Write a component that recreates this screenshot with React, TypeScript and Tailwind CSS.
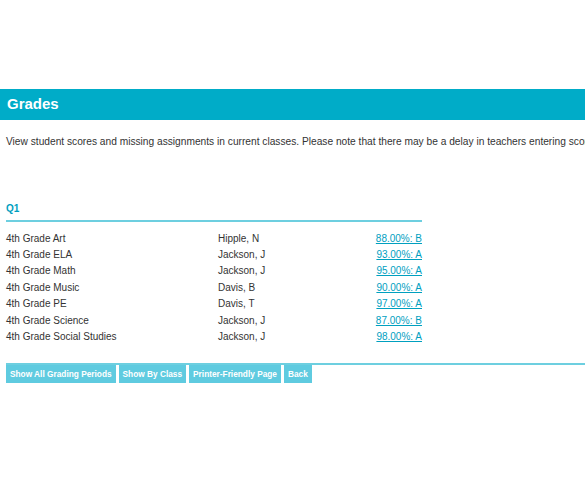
export default function App() {
  const rows = [
    ["4th Grade Art", "Hipple, N", "88.00%: B"],
    ["4th Grade ELA", "Jackson, J", "93.00%: A"],
    ["4th Grade Math", "Jackson, J", "95.00%: A"],
    ["4th Grade Music", "Davis, B", "90.00%: A"],
    ["4th Grade PE", "Davis, T", "97.00%: A"],
    ["4th Grade Science", "Jackson, J", "87.00%: B"],
    ["4th Grade Social Studies", "Jackson, J", "98.00%: A"],
  ];
  const btns = ["Show All Grading Periods", "Show By Class", "Printer-Friendly Page", "Back"];
  return (
    <div className="w-[585px] h-[478px] bg-white text-[#333] text-[10px]" style={{ fontFamily: '"Liberation Sans", Arial, sans-serif' }}>
      <div className="h-[89px]" />
      <div className="h-[31px] bg-[#00acc8] flex items-center px-[7px]">
        <span className="text-white font-bold text-[15px]">Grades</span>
      </div>
      <div className="px-[6px] pt-[15px] leading-[14px] whitespace-nowrap text-[10.2px]">
        View student scores and missing assignments in current classes. Please note that there may be a delay in teachers entering scores.
      </div>
      <div className="pl-[6px] mt-[52px] w-[422px]">
        <div className="text-[#00a0bf] font-bold text-[10px] pb-[4px] border-b-2 border-[#6dcfe0]">Q1</div>
        <div className="pt-[8px]">
          {rows.map((r) => (
            <div key={r[0]} className="flex h-[16.4px] items-center">
              <span className="w-[212px]">{r[0]}</span>
              <span className="flex-1">{r[1]}</span>
              <a className="text-[#00a0bf] underline">{r[2]}</a>
            </div>
          ))}
        </div>
      </div>
      <div className="mt-[18px] border-t-2 border-[#6dcfe0] ml-[6px] flex gap-[3px]">
        {btns.map((b) => (
          <div key={b} className="bg-[#5fcbe0] text-white font-bold text-[8.3px] h-[18px] px-[4px] flex items-center">{b}</div>
        ))}
      </div>
    </div>
  );
}
